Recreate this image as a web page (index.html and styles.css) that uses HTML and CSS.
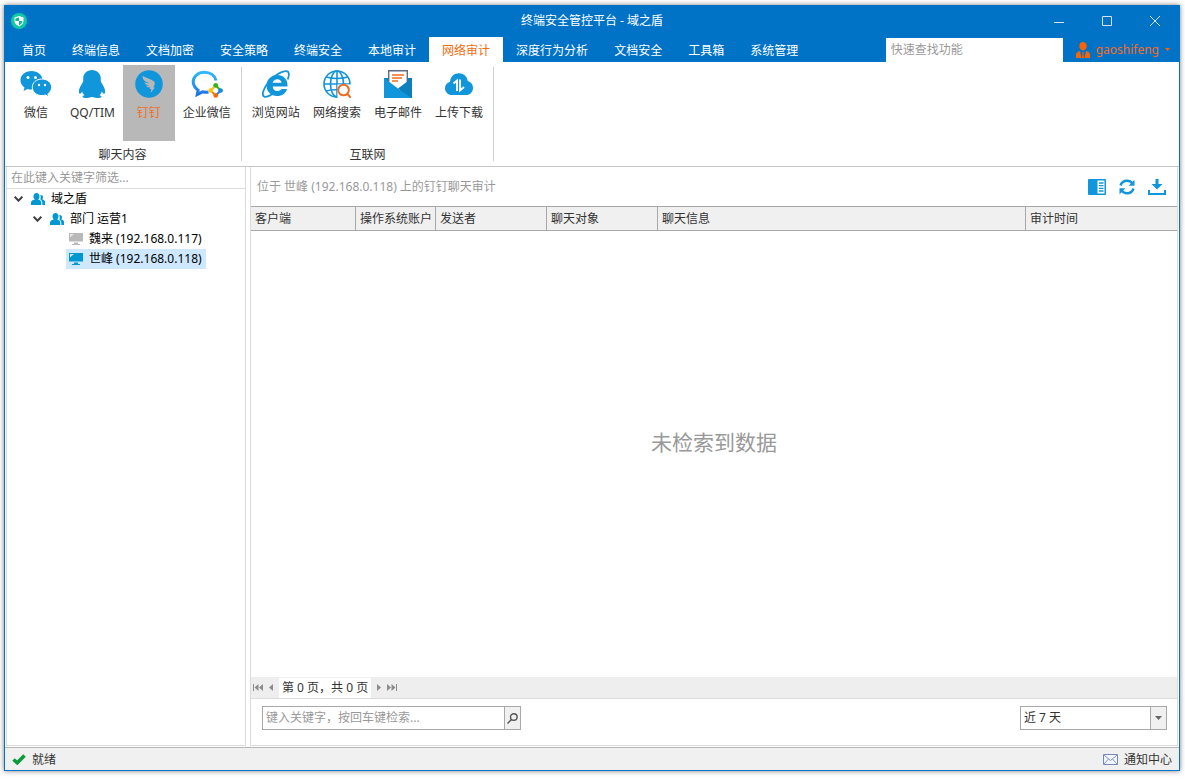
FILE: index.html
```html
<!DOCTYPE html>
<html lang="zh-CN">
<head>
<meta charset="utf-8">
<title>终端安全管控平台 - 域之盾</title>
<link rel="stylesheet" href="styles.css">
</head>
<body>
<div class="window">
  <header class="topbar">
    <div class="titlebar">
      <svg class="logo" viewBox="0 0 16 16"><circle cx="8" cy="8" r="8" fill="#10c9a5"/><path d="M8 3l4.500 1.500v3.500c0 2.500-2 4-4.500 5.500-2.500-1.500-4.500-3-4.500-5.500V4.500z" fill="#fff"/><path d="M8 4.200v3.800H4.400V5.400zM8 8h3.500c0 2-1.500 3.200-3.500 4.300z" fill="#10b894"/></svg>
      <h1 class="title">终端安全管控平台 - 域之盾</h1>
      <div class="controls">
        <button class="control" aria-label="最小化"><svg viewBox="0 0 10 10"><path d="M0 6.500h10"/></svg></button>
        <button class="control" aria-label="最大化"><svg viewBox="0 0 10 10"><path d="M.5.500h9v9h-9z"/></svg></button>
        <button class="control" aria-label="关闭"><svg viewBox="0 0 10 10"><path d="M0 0l10 10M10 0L0 10"/></svg></button>
      </div>
    </div>
    <div class="menubar">
      <nav class="tabs">
        <button class="tab">首页</button>
        <button class="tab">终端信息</button>
        <button class="tab">文档加密</button>
        <button class="tab">安全策略</button>
        <button class="tab">终端安全</button>
        <button class="tab">本地审计</button>
        <button class="tab active">网络审计</button>
        <button class="tab">深度行为分析</button>
        <button class="tab">文档安全</button>
        <button class="tab">工具箱</button>
        <button class="tab">系统管理</button>
      </nav>
      <input class="quick-find" type="text" placeholder="快速查找功能" aria-label="快速查找功能">
      <button class="user">
        <svg class="user-icon" viewBox="0 0 14 16"><path d="M7 0c2.300 0 3.700 1.700 3.700 4S9 8.400 7 8.400 3.300 6.300 3.300 4 4.700 0 7 0z"/><path d="M0 16v-3.500C0 10.500 2 9.500 4 9l1.500 7zM14 16v-3.500c0-2-2-3-4-3.500l-1.500 7zM6.200 10h1.600l-.4 1.500.7 4.500H5.900l.7-4.500z"/></svg>
        <span>gaoshifeng</span>
        <svg class="user-caret" viewBox="0 0 5 3"><path d="M0 0h5L2.500 3z"/></svg>
      </button>
    </div>
  </header>

  <section class="ribbon">
    <div class="group">
      <div class="tools">
        <button class="tool">
          <svg class="tool-icon wide" viewBox="0 0 32 28"><g fill="#1296db"><path d="M11.500 1C5.200 1 .5 5 .5 10.200c0 3 1.500 5.500 4 7.200l-1 3.600 4-2c1.200.4 2.500.6 4 .6 6.200 0 11-4 11-9.300S17.700 1 11.500 1z"/><path d="M22 9c-5.500 0-9.700 3.600-9.700 8.300s4.200 8.300 9.700 8.300c1.300 0 2.400-.2 3.500-.6l3.300 1.800-.9-3c2.300-1.500 3.700-3.900 3.700-6.500C31.600 12.600 27.500 9 22 9z" stroke="#fff"/></g><g fill="#fff"><circle cx="8" cy="7.500" r="1.500"/><circle cx="15.500" cy="7.500" r="1.500"/><circle cx="19" cy="15" r="1.200"/><circle cx="25" cy="15" r="1.200"/></g></svg>
          <span>微信</span>
        </button>
        <button class="tool">
          <svg class="tool-icon" viewBox="0 0 28 28"><path fill="#1296db" d="M14 0C8.800 0 5.200 3.800 5.200 8.500v3C3.700 14.200.9 18 .9 21.300c0 1.700.4 2.500 1 2.500.8 0 1.700-1.300 2.200-2.200.4 1.500 1.200 2.600 2.300 3.600-1.200.4-1.900 1-1.900 1.600 0 1.700 6 1.500 9.500.3 3.500 1.200 9.500 1.400 9.500-.3 0-.6-.7-1.200-1.900-1.600 1.100-1 1.900-2.100 2.300-3.600.5.900 1.400 2.200 2.200 2.200.6 0 1-.8 1-2.500 0-3.300-2.800-7.100-4.300-9.800v-3C22.800 3.800 19.200 0 14 0z"/></svg>
          <span>QQ/TIM</span>
        </button>
        <button class="tool selected">
          <svg class="tool-icon" viewBox="0 0 28 28"><circle cx="14" cy="14" r="13.800" fill="#1296db"/><path fill="#b8b8b8" d="M7.500 6c4 2.300 10.800 3.800 12 6 .8 1.700-.2 3.600-1.200 5.500h1.600L15.500 23l.9-4h-1.800l.8-1.700c-2.400.5-3.800-.4-4.600-1.700 1.200.3 2.300.3 3.300 0-3-.6-4.300-1.700-4.800-3.300 1.500.6 3.200 1 4.800.9C10 11.700 7.500 9.700 7.500 6z"/></svg>
          <span>钉钉</span>
        </button>
        <button class="tool">
          <svg class="tool-icon wide" viewBox="0 0 32 28"><defs><linearGradient id="bubble" x1="0" y1="0" x2="0" y2="1"><stop offset="0" stop-color="#32b8fa"/><stop offset="1" stop-color="#1c74e8"/></linearGradient></defs><path d="M17.500 22c-1.800.4-4 .3-6-.2L6.300 24.500l.8-4.300C4 18 2.200 15.300 2.200 11.800 2.200 6.500 7 2.200 13.300 2.200c6 0 10.700 3.300 11.700 8.300" fill="none" stroke="url(#bubble)" stroke-width="3"/><g fill="none" stroke-width="2"><path d="M24.700 15.500l5 5" stroke="#35b51d"/><path d="M29.700 20.500l-5 5" stroke="#1689e6"/><path d="M24.700 25.500l-5-5" stroke="#ff7a00"/><path d="M19.700 20.500l5-5" stroke="#fdc10a"/></g><circle cx="24.700" cy="15.300" r="2.400" fill="#35b51d"/><circle cx="29.600" cy="20.500" r="2.300" fill="#1689e6"/><circle cx="24.700" cy="25.500" r="2.300" fill="#ff6200"/><circle cx="19.700" cy="20.500" r="2.300" fill="#fdc10a"/></svg>
          <span>企业微信</span>
        </button>
      </div>
      <div class="group-label">聊天内容</div>
    </div>
    <div class="group">
      <div class="tools">
        <button class="tool">
          <svg class="tool-icon" viewBox="0 0 28 28"><path d="M25.500 16.500H10.700c.3 3 2.100 4.500 4.600 4.500 2.200 0 3.500-.7 4.300-2h5.500c-1.500 4.500-5 7-9.900 7C8.700 26 4.500 21.500 4.500 15.700 4.500 10 9 5 15 5c6.800 0 11 4.700 10.500 11.500zM10.700 12.700h8.900c-.3-2.200-2-3.400-4.300-3.400s-4.100 1.200-4.600 3.400z" fill="#1296db"/><path d="M25.700 9.500c1.500-4 1.500-6.500.3-7.800C24.200.3 20 1.600 15.500 4.200 9 8.200 3 15.500 1.400 21c-.9 3-.5 5.200 1 5.700 2 .7 5-.7 8-2.700" fill="none" stroke="#1296db" stroke-width="1.800"/></svg>
          <span>浏览网站</span>
        </button>
        <button class="tool">
          <svg class="tool-icon" viewBox="0 0 28 28"><g fill="none" stroke="#1296db" stroke-width="1.600"><circle cx="14" cy="14" r="13"/><ellipse cx="14" cy="14" rx="6.500" ry="13"/><path d="M14 1v26M1 14h26M3 7q11 3 22 0M3 21q11-3 22 0"/></g><path d="M14.500 14.500h13.500V28H14.500z" fill="#fff"/><circle cx="20.500" cy="20" r="5.300" fill="#fff" stroke="#f36c21" stroke-width="2"/><path d="M24.500 24l3.500 4" stroke="#f36c21" stroke-width="2"/></svg>
          <span>网络搜索</span>
        </button>
        <button class="tool">
          <svg class="tool-icon" viewBox="0 0 28 28"><path d="M0 8h28v20H0z" fill="#0e7fbd"/><path d="M4.700.700h18.600V16L14 21.500 4.700 16z" fill="#fff" stroke="#5d6b87" stroke-width="1.400"/><path d="M8 5h12M8 8h10M8 11h6" stroke="#f36c21" stroke-width="1.400"/><path d="M0 8l14 10.500L28 28H0z" fill="#1296db"/><path d="M14 18.500L28 8v20z" fill="#0e7fbd"/></svg>
          <span>电子邮件</span>
        </button>
        <button class="tool">
          <svg class="tool-icon" viewBox="0 0 28 28"><path d="M7 25C3 25 0 22 0 18.200c0-3.400 2.100-5.700 5-6.500C5.500 6.500 9 3.200 14 3.200c4.500 0 8 3 8.700 7.700 3.200.8 5.300 3.500 5.300 7 0 4-3 7.100-7 7.100z" fill="#1296db"/><path d="M8.500 13.500l3.500-3V21M15 9.500v11l4-3.500" fill="none" stroke="#fff" stroke-width="1.900"/></svg>
          <span>上传下载</span>
        </button>
      </div>
      <div class="group-label">互联网</div>
    </div>
  </section>

  <div class="workspace">
    <aside class="sidebar">
      <input class="tree-filter" type="text" placeholder="在此键入关键字筛选..." aria-label="筛选">
      <ul class="tree">
        <li>
          <button class="node"><svg class="chevron" viewBox="0 0 9 6"><path d="M.7.700l3.800 4L8.300.700"/></svg><svg class="node-icon people" viewBox="0 0 14 12"><path d="M5.500 0C7.300 0 8.500 1.300 8.500 3.200c0 1.500-.6 2.600-1.400 3.300C9 6.900 10.300 8 10.300 9.800V12H0V9.800C0 8 1.700 6.900 3.900 6.500 3.100 5.800 2.500 4.700 2.500 3.200 2.500 1.300 3.700 0 5.500 0zM9.300 2c1.600-.2 2.700.7 2.700 2.200 0 .9-.3 1.600-.9 2 1.800.4 2.900 1.300 2.900 2.800V12h-2.700V9.800c0-1.500-.8-2.700-2-3.400.5-1.400.6-3 0-4.400z"/></svg><span>域之盾</span></button>
          <ul class="branch">
            <li>
              <button class="node"><svg class="chevron" viewBox="0 0 9 6"><path d="M.7.700l3.800 4L8.300.700"/></svg><svg class="node-icon people" viewBox="0 0 14 12"><path d="M5.500 0C7.300 0 8.500 1.300 8.500 3.200c0 1.500-.6 2.600-1.400 3.300C9 6.900 10.300 8 10.300 9.800V12H0V9.800C0 8 1.700 6.900 3.900 6.500 3.100 5.800 2.500 4.700 2.500 3.200 2.500 1.300 3.700 0 5.500 0zM9.300 2c1.600-.2 2.700.7 2.700 2.200 0 .9-.3 1.600-.9 2 1.800.4 2.900 1.300 2.900 2.800V12h-2.700V9.800c0-1.500-.8-2.700-2-3.400.5-1.400.6-3 0-4.400z"/></svg><span>部门 运营1</span></button>
              <ul class="branch leaves">
                <li><button class="node leaf offline"><svg class="node-icon" viewBox="0 0 14 12"><path d="M0 0h14v8.500H0zM5 9.500h4V11h2v1H3v-1h2z"/><path class="glare" d="M1 4.500L5 1H1z"/></svg><span>魏来 (192.168.0.117)</span></button></li>
                <li><button class="node leaf current"><svg class="node-icon" viewBox="0 0 14 12"><path d="M0 0h14v8.500H0zM5 9.500h4V11h2v1H3v-1h2z"/><path class="glare" d="M1 4.500L5 1H1z"/></svg><span>世峰 (192.168.0.118)</span></button></li>
              </ul>
            </li>
          </ul>
        </li>
      </ul>
    </aside>

    <main class="main">
      <div class="main-head">
        <h2 class="location">位于 世峰 (192.168.0.118) 上的钉钉聊天审计</h2>
        <div class="actions">
          <button class="action" aria-label="列设置"><svg viewBox="0 0 18 16"><path d="M1 0h16q1 0 1 1v14q0 1-1 1H1q-1 0-1-1V1q0-1 1-1z" fill="#1296db"/><path d="M9.500 1.500h7v13h-7z" fill="#fff"/><path d="M11 4h4.500M11 6.700h4.500M11 9.400h4.500M11 12h4.500" stroke="#1296db" stroke-width="1.300"/></svg></button>
          <button class="action" aria-label="刷新"><svg viewBox="0 0 18 16"><path d="M2.500 6.500C3.500 3.500 6 1.800 9 1.800c2.300 0 4 .8 5.500 2.700M15.500 9.500c-1 3-3.500 4.700-6.500 4.700-2.300 0-4-.8-5.500-2.700" fill="none" stroke="#1296db" stroke-width="2.400"/><path d="M16.500.800v6h-6zM1.500 15.200v-6h6z" fill="#1296db"/></svg></button>
          <button class="action" aria-label="导出"><svg viewBox="0 0 18 16"><path d="M7.500 0h3v5h4L9 10.500 3.500 5h4z" fill="#1296db"/><path d="M1 11v4h16v-4" fill="none" stroke="#1296db" stroke-width="2"/></svg></button>
        </div>
      </div>
      <table class="grid">
        <thead>
          <tr><th class="c-client">客户端</th><th class="c-account">操作系统账户</th><th class="c-party">发送者</th><th class="c-party">聊天对象</th><th>聊天信息</th><th class="c-time">审计时间</th></tr>
        </thead>
      </table>
      <div class="empty">未检索到数据</div>
      <div class="pager">
        <button class="page-button" aria-label="首页"><svg class="page-first" viewBox="0 0 10 7"><path d="M0 0h1v7H0zM5.500 0v7L1.500 3.500zM10 0v7L6 3.500z"/></svg></button>
        <button class="page-button" aria-label="上一页"><svg viewBox="0 0 4 7"><path d="M4 0v7L0 3.500z"/></svg></button>
        <span class="page-info">第 0 页，共 0 页</span>
        <button class="page-button" aria-label="下一页"><svg viewBox="0 0 4 7"><path d="M0 0v7l4-3.500z"/></svg></button>
        <button class="page-button" aria-label="末页"><svg class="page-first" viewBox="0 0 10 7"><path d="M9 0h1v7H9zM4.500 0v7l4-3.500zM0 0v7l4-3.500z"/></svg></button>
      </div>
      <div class="filters">
        <div class="search">
          <input class="search-text" type="text" placeholder="键入关键字，按回车键检索..." aria-label="检索">
          <button class="search-button" aria-label="搜索"><svg viewBox="0 0 11 11"><circle cx="6.800" cy="4" r="3.300"/><path d="M4.500 6.500L.5 10.500"/></svg></button>
        </div>
        <div class="range">
          <select class="range-select" aria-label="时间范围"><option>近 7 天</option></select>
          <span class="range-arrow"><svg viewBox="0 0 7 4"><path d="M0 0h7L3.500 4z"/></svg></span>
        </div>
      </div>
    </main>
  </div>

  <footer class="statusbar">
    <span class="status"><svg class="check" viewBox="0 0 14 11"><path d="M1.500 5.500l3.800 3.300L12.500 1.500" fill="none" stroke="#0c9a3c" stroke-width="3.600"/></svg>就绪</span>
    <button class="notify"><svg class="mail" viewBox="0 0 15 11"><path d="M.5.500h14v10H.5z" fill="#f3f5fb" stroke="#7488bd"/><path d="M1 1l6.500 5.500L14 1M1 10l4.500-5M14 10L9.500 5" fill="none" stroke="#8496c6"/></svg>通知中心</button>
  </footer>
</div>
</body>
</html>
```
FILE: styles.css
```css
* {
  box-sizing: border-box;
}

body {
  margin: 0;
  min-height: 100vh;
  padding: 5px 5px 8px 4px;
  display: flex;
  background: #fff;
  color: #333;
  font: 12px/16px "Noto Sans", "Noto Sans CJK SC", sans-serif;
}

button,
input,
select {
  margin: 0;
  padding: 0;
  border: 0;
  border-radius: 0;
  background: none;
  color: inherit;
  font: inherit;
}

input {
  min-width: 0;
}

input::placeholder {
  color: #999;
  opacity: 1;
}

svg {
  display: block;
  flex: none;
}

h1,
h2 {
  margin: 0;
  font-size: 12px;
  font-weight: 400;
}

.window {
  flex: 1;
  min-width: 0;
  display: flex;
  flex-direction: column;
  border: 1px solid #0173c7;
  border-top: 0;
  background: #fff;
  box-shadow: 0 0 5px rgba(0, 0, 0, 0.5);
}

/* Title and menu */
.topbar {
  background: #0173c7;
  color: #fff;
}

.titlebar {
  height: 32px;
  display: grid;
  grid-template-columns: 1fr auto 1fr;
  align-items: center;
}

.logo {
  width: 16px;
  height: 16px;
  margin-left: 6px;
}

.controls {
  justify-self: end;
  display: flex;
}

.control {
  width: 48px;
  height: 32px;
  display: grid;
  place-items: center;
}

.control svg {
  width: 10px;
  height: 10px;
  fill: none;
  stroke: #d8e3ee;
}

.menubar {
  display: flex;
  height: 25px;
}

.tabs {
  flex: 1;
  display: flex;
  padding-left: 4px;
}

.tab {
  padding: 2px 13px 0;
  white-space: nowrap;
}

.tab.active {
  background: #fff;
  color: #f36c0c;
}

.quick-find {
  width: 177px;
  margin-top: 1px;
  padding: 0 5px;
  background: #fff;
  color: #333;
}

.user {
  display: flex;
  align-items: center;
  gap: 6px;
  padding: 0 9px 0 13px;
  color: #f76b1c;
}

.user svg {
  fill: #ff6200;
}

.user-icon {
  width: 14px;
  height: 16px;
}

.user-caret {
  width: 5px;
  height: 3px;
}

/* Ribbon */
.ribbon {
  display: flex;
  height: 105px;
  border-bottom: 1px solid #c6c6c6;
}

.group {
  display: flex;
  flex-direction: column;
  padding: 3px 6px 4px;
  border-right: 1px solid #d0d0d0;
  border-image: linear-gradient(transparent 6px, #d0d0d0 6px, #d0d0d0 98px, transparent 98px) 1;
}

.group:first-child {
  padding-left: 5px;
}

.tools {
  display: flex;
  gap: 5px;
}

.group:first-child .tools {
  gap: 4px;
}

.tool {
  min-width: 52px;
  height: 76px;
  padding: 5px 4px 0;
  display: flex;
  flex-direction: column;
  align-items: center;
  gap: 7px;
  white-space: nowrap;
}

.tool.selected {
  background: #b8b8b8;
  color: #f36c21;
}

.tool-icon {
  width: 28px;
  height: 28px;
}

.tool-icon.wide {
  width: 32px;
}

.group-label {
  margin-top: 6px;
  text-align: center;
}

/* Device tree */
.workspace {
  flex: 1;
  display: flex;
  gap: 4px;
  padding: 0 1px 1px;
}

.sidebar {
  width: 240px;
  flex: none;
  border: 1px solid #dcdcdc;
  border-top: 0;
  color: #000;
}

.tree-filter {
  display: block;
  width: 100%;
  height: 22px;
  padding: 0 4px;
  border-bottom: 1px solid #dcdcdc;
}

.tree,
.branch {
  list-style: none;
  margin: 0;
  padding: 0;
}

.tree {
  padding-left: 7px;
}

.branch {
  padding-left: 19px;
}

.branch.leaves {
  padding-left: 33px;
}

.node {
  height: 20px;
  display: flex;
  align-items: center;
  white-space: nowrap;
}

.node.leaf {
  padding: 0 4px 0 3px;
}

.node.current {
  background: #cde8ff;
}

.chevron {
  width: 9px;
  height: 6px;
  margin-right: 8px;
  fill: none;
  stroke: #404040;
  stroke-width: 2;
}

.node-icon {
  width: 14px;
  height: 12px;
  margin-right: 6px;
  fill: #0097d3;
}

.offline .node-icon {
  fill: #b9b9b9;
}

.glare {
  fill: #cbe8f5;
}

.offline .glare {
  fill: #e6e6e6;
}

/* Audit records */
.main {
  flex: 1;
  min-width: 0;
  display: flex;
  flex-direction: column;
  border: 1px solid #dcdcdc;
  border-top: 0;
}

.main-head {
  height: 39px;
  display: flex;
  align-items: center;
  justify-content: space-between;
  padding: 0 11px 0 6px;
}

.location {
  color: #999;
}

.actions {
  display: flex;
  gap: 12px;
}

.action svg {
  width: 18px;
  height: 16px;
}

.grid {
  width: 100%;
  table-layout: fixed;
  border-collapse: separate;
  border-spacing: 0;
}

.grid th {
  height: 25px;
  padding: 0 4px;
  border: solid #a8a8a8;
  border-width: 1px 1px 1px 0;
  background: #f0f0f0;
  font-weight: 400;
  text-align: left;
  white-space: nowrap;
}

.grid th:last-child {
  border-right: 0;
}

.c-client {
  width: 105px;
}

.c-account {
  width: 80px;
}

.c-party {
  width: 111px;
}

.c-time {
  width: 151px;
}

.empty {
  flex: 1;
  display: grid;
  place-items: center;
  padding-bottom: 25px;
  color: #999;
  font-size: 21px;
  line-height: 28px;
}

.pager {
  height: 22px;
  display: flex;
  align-items: center;
  gap: 6px;
  padding-left: 2px;
  border-bottom: 1px solid #dcdcdc;
  background: #eee;
}

.page-button svg {
  width: 4px;
  height: 7px;
  fill: #8c8c8c;
}

.page-button .page-first {
  width: 10px;
}

.page-info {
  padding: 2px 3px;
  background: #fff;
}

.filters {
  display: flex;
  justify-content: space-between;
  padding: 7px 10px 15px 11px;
}

.search,
.range {
  display: flex;
  height: 24px;
  border: 1px solid #a8a8a8;
}

.search {
  width: 259px;
}

.search-text {
  flex: 1;
  padding: 0 3px;
}

.search-button,
.range-arrow {
  width: 16px;
  display: grid;
  place-items: center;
  border-left: 1px solid #a8a8a8;
  background: #f0f0f0;
}

.search-button svg {
  width: 11px;
  height: 11px;
  fill: none;
  stroke: #555;
  stroke-width: 1.4;
}

.range {
  width: 147px;
}

.range-select {
  flex: 1;
  padding: 0 3px;
  appearance: none;
}

.range-arrow svg {
  width: 7px;
  height: 4px;
  fill: #666;
}

/* Status bar */
.statusbar {
  height: 23px;
  display: flex;
  align-items: center;
  justify-content: space-between;
  padding: 1px 7px 0;
  border-top: 1px solid #b8b8b8;
  background: #f0f0f0;
}

.status,
.notify {
  display: flex;
  align-items: center;
  gap: 6px;
}

.check {
  width: 14px;
  height: 11px;
}

.mail {
  width: 15px;
  height: 11px;
}
```
